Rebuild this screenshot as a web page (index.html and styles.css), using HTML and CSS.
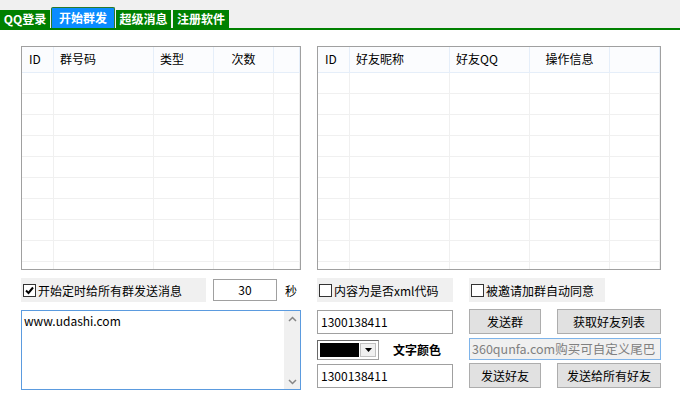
FILE: index.html
```html
<!DOCTYPE html>
<html>
<head>
<meta charset="utf-8">
<link rel="stylesheet" href="styles.css">
</head>
<body>
<div class="tabs">
  <div class="tab t1">QQ登录</div>
  <div class="tab active t2">开始群发</div>
  <div class="tab t3">超级消息</div>
  <div class="tab t4">注册软件</div>
</div>
<div class="main">
  <div class="col left">
    <div class="grid gl">
      <div class="hdr">
        <div class="c c-id">ID</div><div class="c c-a">群号码</div><div class="c c-b">类型</div><div class="c c-c center">次数</div><div class="c c-x"></div>
      </div>
      <div class="rows">
        <div class="row"><div class="c c-id"></div><div class="c c-a"></div><div class="c c-b"></div><div class="c c-c"></div><div class="c c-x"></div></div>
        <div class="row"><div class="c c-id"></div><div class="c c-a"></div><div class="c c-b"></div><div class="c c-c"></div><div class="c c-x"></div></div>
        <div class="row"><div class="c c-id"></div><div class="c c-a"></div><div class="c c-b"></div><div class="c c-c"></div><div class="c c-x"></div></div>
        <div class="row"><div class="c c-id"></div><div class="c c-a"></div><div class="c c-b"></div><div class="c c-c"></div><div class="c c-x"></div></div>
        <div class="row"><div class="c c-id"></div><div class="c c-a"></div><div class="c c-b"></div><div class="c c-c"></div><div class="c c-x"></div></div>
        <div class="row"><div class="c c-id"></div><div class="c c-a"></div><div class="c c-b"></div><div class="c c-c"></div><div class="c c-x"></div></div>
        <div class="row"><div class="c c-id"></div><div class="c c-a"></div><div class="c c-b"></div><div class="c c-c"></div><div class="c c-x"></div></div>
        <div class="row"><div class="c c-id"></div><div class="c c-a"></div><div class="c c-b"></div><div class="c c-c"></div><div class="c c-x"></div></div>
        <div class="row"><div class="c c-id"></div><div class="c c-a"></div><div class="c c-b"></div><div class="c c-c"></div><div class="c c-x"></div></div>
        <div class="row"><div class="c c-id"></div><div class="c c-a"></div><div class="c c-b"></div><div class="c c-c"></div><div class="c c-x"></div></div>
      </div>
    </div>
    <div class="opts-left">
      <label class="chk wide">
        <svg class="box" width="13" height="13" viewBox="0 0 13 13"><rect x="0.5" y="0.5" width="12" height="12" fill="#fff" stroke="#333"/><path d="M3 6.5 L5.5 9 L10 3.5" fill="none" stroke="#000" stroke-width="2"/></svg>
        <span>开始定时给所有群发送消息</span>
      </label>
      <div class="num">30</div>
      <span class="sec">秒</span>
    </div>
    <div class="memo">
      <div class="memo-text">www.udashi.com</div>
      <div class="sbar">
        <svg width="9" height="6" viewBox="0 0 9 6"><path d="M1 5 L4.5 1.5 L8 5" fill="none" stroke="#858585" stroke-width="1.5"/></svg>
        <svg width="9" height="6" viewBox="0 0 9 6"><path d="M1 1 L4.5 4.5 L8 1" fill="none" stroke="#858585" stroke-width="1.5"/></svg>
      </div>
    </div>
  </div>
  <div class="col right">
    <div class="grid gr">
      <div class="hdr">
        <div class="c c-id">ID</div><div class="c c-a">好友昵称</div><div class="c c-b2">好友QQ</div><div class="c c-c2 center">操作信息</div><div class="c c-x"></div>
      </div>
      <div class="rows">
        <div class="row"><div class="c c-id"></div><div class="c c-a"></div><div class="c c-b2"></div><div class="c c-c2"></div><div class="c c-x"></div></div>
        <div class="row"><div class="c c-id"></div><div class="c c-a"></div><div class="c c-b2"></div><div class="c c-c2"></div><div class="c c-x"></div></div>
        <div class="row"><div class="c c-id"></div><div class="c c-a"></div><div class="c c-b2"></div><div class="c c-c2"></div><div class="c c-x"></div></div>
        <div class="row"><div class="c c-id"></div><div class="c c-a"></div><div class="c c-b2"></div><div class="c c-c2"></div><div class="c c-x"></div></div>
        <div class="row"><div class="c c-id"></div><div class="c c-a"></div><div class="c c-b2"></div><div class="c c-c2"></div><div class="c c-x"></div></div>
        <div class="row"><div class="c c-id"></div><div class="c c-a"></div><div class="c c-b2"></div><div class="c c-c2"></div><div class="c c-x"></div></div>
        <div class="row"><div class="c c-id"></div><div class="c c-a"></div><div class="c c-b2"></div><div class="c c-c2"></div><div class="c c-x"></div></div>
        <div class="row"><div class="c c-id"></div><div class="c c-a"></div><div class="c c-b2"></div><div class="c c-c2"></div><div class="c c-x"></div></div>
        <div class="row"><div class="c c-id"></div><div class="c c-a"></div><div class="c c-b2"></div><div class="c c-c2"></div><div class="c c-x"></div></div>
        <div class="row"><div class="c c-id"></div><div class="c c-a"></div><div class="c c-b2"></div><div class="c c-c2"></div><div class="c c-x"></div></div>
      </div>
    </div>
    <div class="opts-right">
      <label class="chk mid">
        <svg class="box" width="13" height="13" viewBox="0 0 13 13"><rect x="0.5" y="0.5" width="12" height="12" fill="#fff" stroke="#333"/></svg>
        <span>内容为是否xml代码</span>
      </label>
      <label class="chk mid">
        <svg class="box" width="13" height="13" viewBox="0 0 13 13"><rect x="0.5" y="0.5" width="12" height="12" fill="#fff" stroke="#333"/></svg>
        <span>被邀请加群自动同意</span>
      </label>
    </div>
    <div class="ctrls">
      <div class="field r1">1300138411</div>
      <div class="btns r1b">
        <div class="btn b-s">发送群</div>
        <div class="btn b-l">获取好友列表</div>
      </div>
      <div class="colorrow">
        <div class="combo">
          <div class="swatch"></div>
          <div class="drop"><svg width="7" height="4" viewBox="0 0 7 4"><path d="M0 0 H7 L3.5 4 Z" fill="#000"/></svg></div>
        </div>
        <span class="clabel">文字颜色</span>
      </div>
      <div class="tail">360qunfa.com购买可自定义尾巴</div>
      <div class="field r3">1300138411</div>
      <div class="btns r3b">
        <div class="btn b-s">发送好友</div>
        <div class="btn b-l">发送给所有好友</div>
      </div>
    </div>
  </div>
</div>
</body>
</html>
```

FILE: styles.css
```css
* { box-sizing: border-box; }
html, body { margin: 0; padding: 0; }
body {
  width: 680px;
  height: 398px;
  background: #fff;
  font-family: "Noto Sans CJK SC", "Microsoft YaHei", sans-serif;
  font-size: 12px;
  color: #000;
  overflow: hidden;
}
.tabs {
  height: 30px;
  background: #f0f0f0;
  border-bottom: 2px solid #008000;
  display: flex;
  align-items: flex-end;
  gap: 1px;
}
.tab {
  height: 18px;
  background: #008000;
  color: #fff;
  font-weight: bold;
  font-size: 12px;
  line-height: 18px;
  text-align: center;
}
.t1 { width: 50px; }
.t2 { width: 64px; }
.t3 { width: 55px; margin-right: 1px; }
.t4 { width: 56px; }
.tab.active {
  height: 21px;
  line-height: 20px;
  background: #0a8cff;
  border: 1px solid #2a7a2a;
  border-bottom: none;
  border-radius: 2px 2px 0 0;
}
.main {
  display: flex;
  gap: 16px;
  padding: 16px 0 0 21px;
}
.col { display: flex; flex-direction: column; }
.left { width: 280px; }
.right { width: 344px; }
.grid {
  height: 224px;
  border: 1px solid #a0a0a0;
  overflow: hidden;
  background: #fff;
}
.hdr, .row { display: flex; }
.hdr {
  height: 26px;
  background: #fbfcfe;
  border-bottom: 1px solid #e5eef9;
}
.hdr .c {
  border-right: 1px solid #e5eef9;
  line-height: 24px;
  padding-left: 6px;
  white-space: nowrap;
}
.hdr .c.center { text-align: center; padding-left: 0; }
.row { height: 21px; border-bottom: 1px solid #f0f0f0; }
.row .c { border-right: 1px solid #f0f0f0; }
.c { flex: none; }
.c-id { width: 32px; }
.c-a { width: 100px; }
.c-b { width: 60px; }
.c-c { width: 60px; }
.c-b2 { width: 80px; }
.c-c2 { width: 80px; }
.c-x { width: 26px; }
.gr .c-x { width: 50px; }
.hdr .c-id { padding-left: 7px; }

.opts-left {
  margin-top: 8px;
  display: flex;
  align-items: center;
  height: 24px;
}
.chk {
  display: flex;
  align-items: center;
  height: 24px;
  background: #f0f0f0;
  padding-left: 2px;
  gap: 2px;
  white-space: nowrap;
}
.chk .box { flex: none; }
.chk.wide { width: 185px; }
.chk.mid { width: 136px; }
.num {
  margin-left: 7px;
  width: 64px;
  height: 22px;
  border: 1px solid #a0a0a0;
  text-align: center;
  line-height: 20px;
}
.sec { margin-left: 8px; }
.memo {
  margin-top: 8px;
  height: 80px;
  border: 1px solid #5b9bdf;
  display: flex;
}
.memo-text { flex: 1; padding: 1px 2px; }
.sbar {
  width: 16px;
  background: #f0f0f0;
  display: flex;
  flex-direction: column;
  justify-content: space-between;
  align-items: center;
  padding: 5px 0 4px;
}

.opts-right {
  margin-top: 8px;
  display: flex;
  gap: 16px;
}
.ctrls {
  margin-top: 7px;
  display: grid;
  grid-template-columns: 136px 192px;
  column-gap: 16px;
  grid-template-rows: 25px 21px 25px;
  row-gap: 4px;
}
.field {
  height: 24px;
  border: 1px solid #a0a0a0;
  padding-left: 3px;
  line-height: 22px;
  align-self: center;
}
.btns { display: flex; gap: 16px; }
.btn {
  height: 25px;
  background: #e1e1e1;
  border: 1px solid #adadad;
  text-align: center;
  line-height: 23px;
}
.b-s { width: 72px; }
.b-l { width: 104px; }
.colorrow {
  display: flex;
  align-items: center;
  padding-top: 2px;
}
.combo {
  width: 62px;
  height: 20px;
  border: 1px solid #a0a0a0;
  border-top-color: #696969;
  border-left-color: #696969;
  display: flex;
  padding: 2px;
  background: #fff;
}
.swatch { width: 40px; background: #000; }
.drop {
  margin-left: 1px;
  width: 16px;
  background: #f0f0f0;
  border: 1px solid #c0c0c0;
  display: flex;
  align-items: center;
  justify-content: center;
}
.clabel { margin-left: 14px; font-weight: bold; }
.tail {
  height: 22px;
  border: 1px solid #7eb4ea;
  background: #f0f0f0;
  color: #808080;
  padding-left: 2px;
  line-height: 20px;
  font-size: 12.5px;
  white-space: nowrap;
  overflow: hidden;
  align-self: center;
}
```
